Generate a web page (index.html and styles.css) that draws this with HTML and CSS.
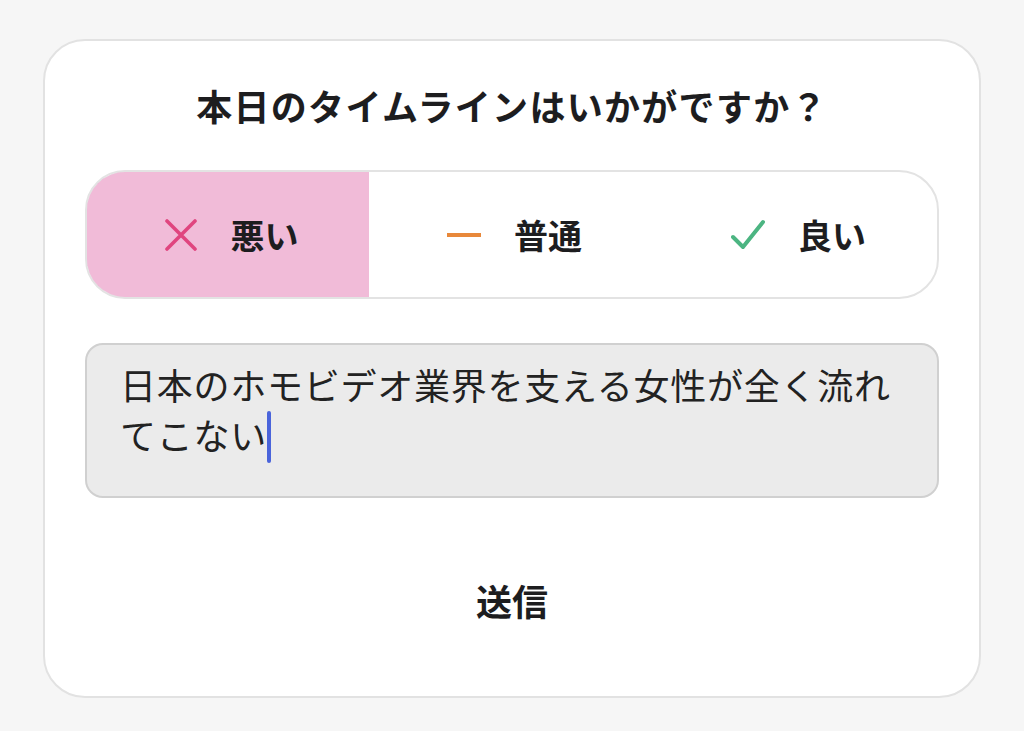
FILE: index.html
```html
<!DOCTYPE html>
<html lang="ja">
<head>
<meta charset="utf-8">
<link rel="stylesheet" href="styles.css">
</head>
<body>
<div class="card">
  <h1 class="title">本日のタイムラインはいかがですか？</h1>
  <div class="segments">
    <div class="seg seg-active">
      <svg class="icon" viewBox="0 0 34 32"><path d="M3 2 L31 30 M31 2 L3 30" stroke="#e0457f" stroke-width="3.6" stroke-linecap="round" fill="none"/></svg>
      <span class="seg-label">悪い</span>
    </div>
    <div class="seg">
      <svg class="icon" viewBox="0 0 34 32"><path d="M0 16 H34" stroke="#e8883a" stroke-width="4" fill="none"/></svg>
      <span class="seg-label">普通</span>
    </div>
    <div class="seg">
      <svg class="icon" viewBox="0 0 34 32"><path d="M2 18 L12 28 L32 3" stroke="#4cb582" stroke-width="4" stroke-linecap="round" stroke-linejoin="round" fill="none"/></svg>
      <span class="seg-label">良い</span>
    </div>
  </div>
  <div class="input">日本のホモビデオ業界を支える女性が全く流れてこない<span class="caret"></span></div>
  <div class="submit">送信</div>
</div>
</body>
</html>
```

FILE: styles.css
```css
* { box-sizing: border-box; }
html, body { margin: 0; padding: 0; }
body {
  background: #f6f6f6;
  font-family: "Noto Sans CJK JP", "Noto Sans", sans-serif;
  color: #1d1d1f;
  width: 1024px;
  height: 731px;
  overflow: hidden;
  padding: 39px 0 0 43px;
}
.card {
  width: 938px;
  height: 659px;
  background: #ffffff;
  border: 2px solid #e2e2e2;
  border-radius: 42px;
  padding: 39px 40px 0 40px;
  display: flex;
  flex-direction: column;
}
.title {
  margin: 0;
  font-size: 36px;
  font-weight: 700;
  line-height: 50px;
  text-align: center;
  letter-spacing: 1.3px;
}
.segments {
  margin-top: 40px;
  height: 129px;
  border: 2px solid #e3e3e3;
  border-radius: 40px;
  display: grid;
  grid-template-columns: 282px 1fr 1fr;
  overflow: hidden;
}
.seg {
  display: flex;
  align-items: center;
  justify-content: center;
  gap: 33px;
  padding-left: 7px;
}
.seg-active {
  background: #f1bbd8;
  margin: -2px 0 -2px -2px;
  border: 2px solid #d9a3c3;
  border-right: none;
  border-radius: 40px 0 0 40px;
  padding-left: 6px;
}
.icon {
  width: 34px;
  height: 32px;
  flex: none;
}
.seg-label {
  font-size: 34px;
  font-weight: 700;
  line-height: 40px;
}
.input {
  margin-top: 44px;
  height: 155px;
  background: #ebebeb;
  border: 2px solid #d0d0d0;
  border-radius: 18px;
  padding: 14px 20px 0 33px;
  font-size: 36px;
  line-height: 50px;
  letter-spacing: 0.75px;
  color: #222222;
}
.caret {
  display: inline-block;
  width: 4px;
  height: 52px;
  background: #4a64db;
  border-radius: 2px;
  vertical-align: -13px;
  margin-left: 0;
}
.submit {
  margin-top: 77px;
  font-size: 36px;
  font-weight: 700;
  line-height: 50px;
  text-align: center;
}
```
